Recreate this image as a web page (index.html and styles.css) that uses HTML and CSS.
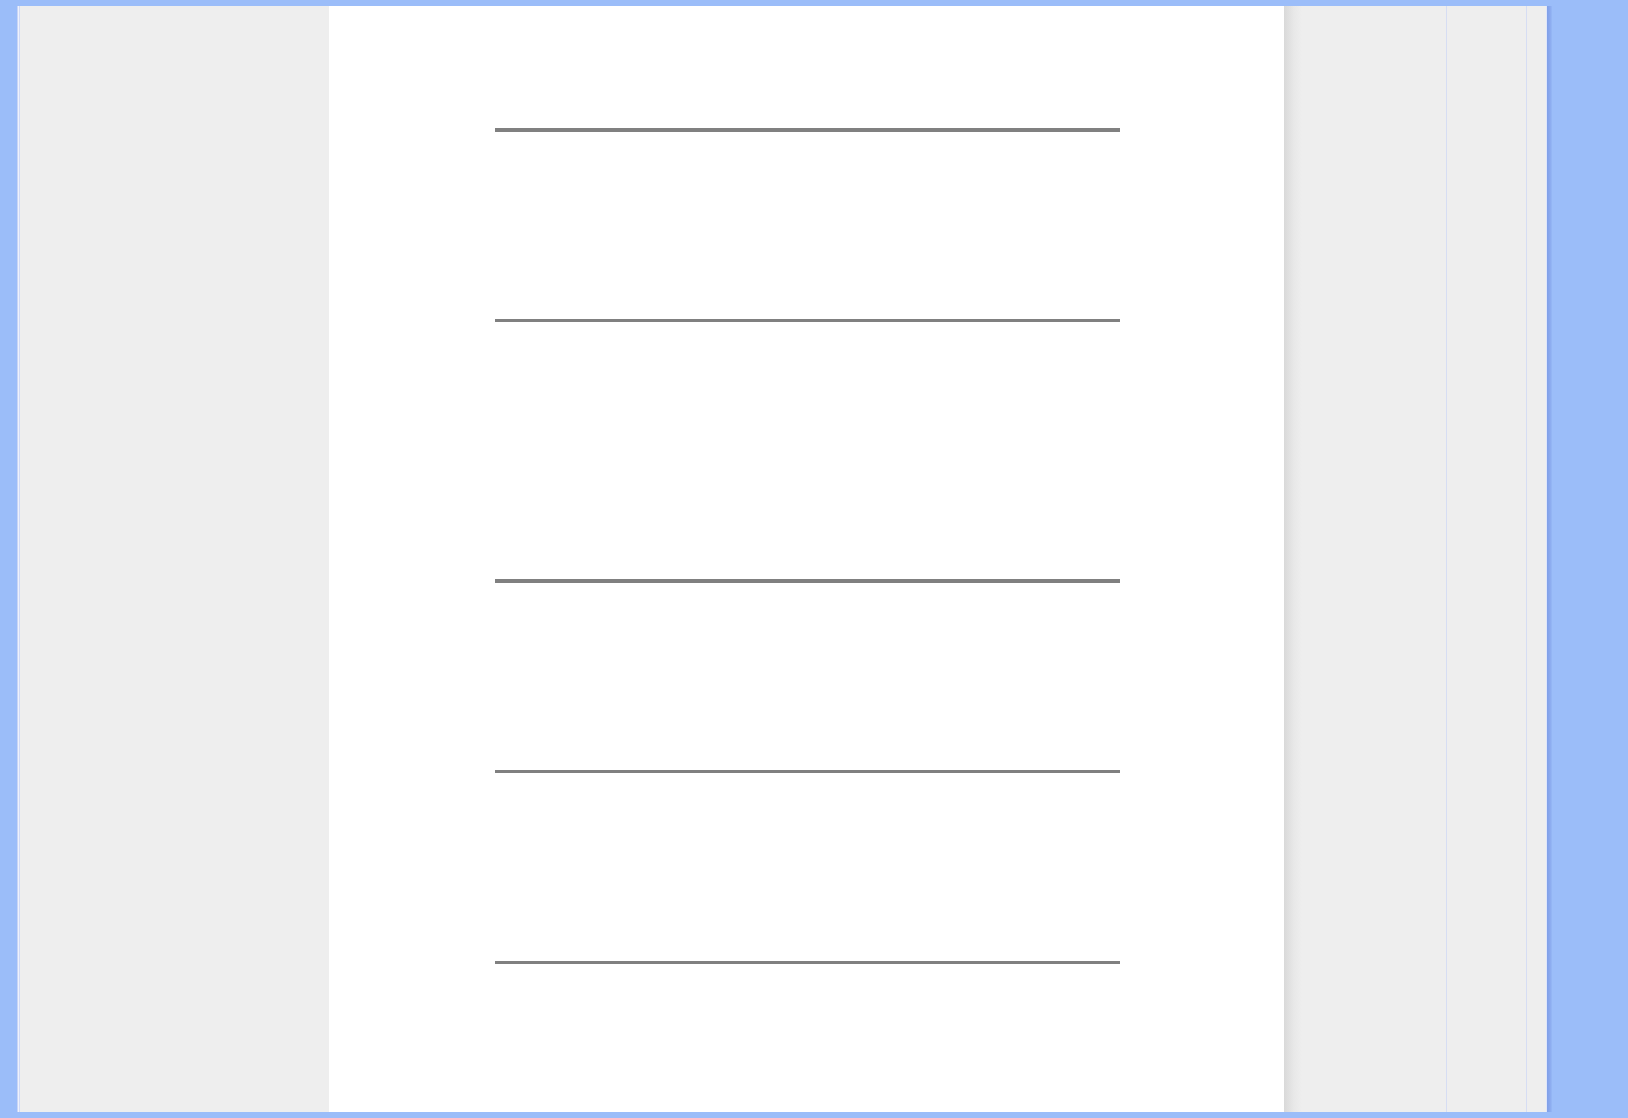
FILE: index.html
```html
<!DOCTYPE html>
<html>
<head>
<meta charset="utf-8">
<title>Page</title>
<link rel="stylesheet" href="styles.css">
</head>
<body>
<div class="frame">
  <div class="edge-left"></div>
  <div class="side-left"></div>
  <div class="main">
    <div class="rule thick r1"></div>
    <div class="rule thin r2"></div>
    <div class="rule thick r3"></div>
    <div class="rule thin r4"></div>
    <div class="rule thin r5"></div>
  </div>
  <div class="side-right"></div>
  <div class="col-a"></div>
  <div class="col-b"></div>
  <div class="edge-right"></div>
</div>
</body>
</html>
```
FILE: styles.css
```css
html, body {
  margin: 0;
  padding: 0;
  background: #9bbdf9;
  font-family: "Liberation Sans", Arial, sans-serif;
}
.frame {
  display: flex;
  height: 1106px;
  margin-top: 6px;
  margin-left: 17px;
}
.edge-left {
  width: 3px;
  background: linear-gradient(to right, #c8d4f6 0, #c8d4f6 1px, #eef2fc 1px, #eef2fc 2px, #d0daf6 2px);
}
.side-left {
  width: 309px;
  background: #eeeeee;
}
.main {
  width: 955px;
  box-sizing: border-box;
  padding-left: 2px;
  background: #ffffff;
  display: flex;
  flex-direction: column;
  align-items: center;
}
.rule {
  width: 625px;
  background: #808080;
  flex: none;
}
.thick { height: 4px; }
.thin { height: 3px; }
.r1 { margin-top: 122px; }
.r2 { margin-top: 187px; }
.r3 { margin-top: 257px; }
.r4 { margin-top: 187px; }
.r5 { margin-top: 188px; }
.side-right {
  width: 162px;
  background: linear-gradient(to right, #d9d9d9 0, #e8e8e8 10px, #eeeeee 18px, #eeeeee 100%);
  border-right: 1px solid #d6ddf3;
}
.col-a {
  width: 79px;
  background: #eeeeee;
  border-right: 1px solid #d6ddf3;
}
.col-b {
  width: 19px;
  background: #eeeeee;
}
.edge-right {
  width: 6px;
  background: linear-gradient(to right, #dfe6fa 0, #dfe6fa 1px, #7f9fe8 1px, #8aa9ee 4px, #96b8f6 6px);
}
```
